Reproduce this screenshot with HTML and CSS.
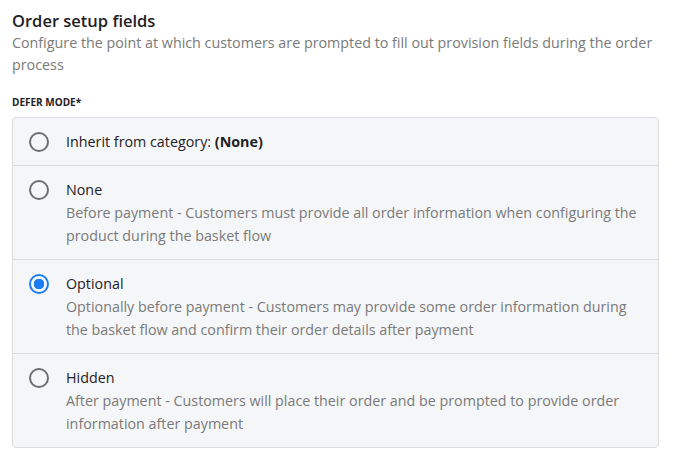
FILE: index.html
```html
<!DOCTYPE html>
<html lang="en">
<head>
    <meta charset="UTF-8">
    <title>Order setup fields</title>
    <link rel="stylesheet" href="styles.css">
</head>
<body>
    <div class="section">
        <h2 class="section-title">Order setup fields</h2>
        <p class="section-desc">Configure the point at which customers are prompted to fill out provision fields during the order process</p>

        <div class="field-label">Defer mode*</div>

        <div class="option-list">
            <label class="option">
                <span class="radio"></span>
                <span class="option-text">
                    <span class="option-title">Inherit from category: <b>(None)</b></span>
                </span>
            </label>
            <label class="option">
                <span class="radio"></span>
                <span class="option-text">
                    <span class="option-title">None</span>
                    <span class="option-desc">Before payment - Customers must provide all order information when configuring the product during the basket flow</span>
                </span>
            </label>
            <label class="option">
                <span class="radio checked"></span>
                <span class="option-text">
                    <span class="option-title">Optional</span>
                    <span class="option-desc">Optionally before payment - Customers may provide some order information during the basket flow and confirm their order details after payment</span>
                </span>
            </label>
            <label class="option">
                <span class="radio"></span>
                <span class="option-text">
                    <span class="option-title">Hidden</span>
                    <span class="option-desc">After payment - Customers will place their order and be prompted to provide order information after payment</span>
                </span>
            </label>
        </div>
    </div>
</body>
</html>
```

FILE: styles.css
```css
body {
    margin: 0;
    background: #fff;
    font-family: "Open Sans", "Noto Sans", sans-serif;
    color: #1f2124;
}

.section {
    padding: 10px 20px 0 12px;
}

.section-title {
    margin: 0;
    font-size: 16.5px;
    font-weight: 600;
    line-height: 22px;
}

.section-desc {
    margin: 0;
    font-size: 14.3px;
    line-height: 22px;
    color: #7a7a7a;
}

.field-label {
    margin-top: 19px;
    font-size: 10px;
    font-weight: 700;
    text-transform: uppercase;
    line-height: 14px;
}

.option-list {
    margin-top: 8px;
    background: #f5f6f8;
    border: 1px solid #dcdde0;
    border-radius: 4px;
}

.option {
    display: flex;
    align-items: flex-start;
    gap: 17px;
    padding: 13px 16px 12px;
    border-top: 1px solid #dcdde0;
    cursor: pointer;
}

.option:first-child {
    border-top: none;
}

.radio {
    flex: none;
    width: 20px;
    height: 20px;
    margin-top: 1px;
    box-sizing: border-box;
    border: 2px solid #6f6f6f;
    border-radius: 50%;
}

.radio.checked {
    border-color: #1a7ef2;
    background: radial-gradient(circle, #1a7ef2 0 5px, transparent 5.5px);
}

.option-text {
    display: flex;
    flex-direction: column;
    font-size: 14.3px;
}

.option-title {
    line-height: 22px;
    color: #1f2124;
}

.option-title b {
    font-weight: 700;
}

.option-desc {
    line-height: 23px;
    color: #7a7a7a;
}
```
